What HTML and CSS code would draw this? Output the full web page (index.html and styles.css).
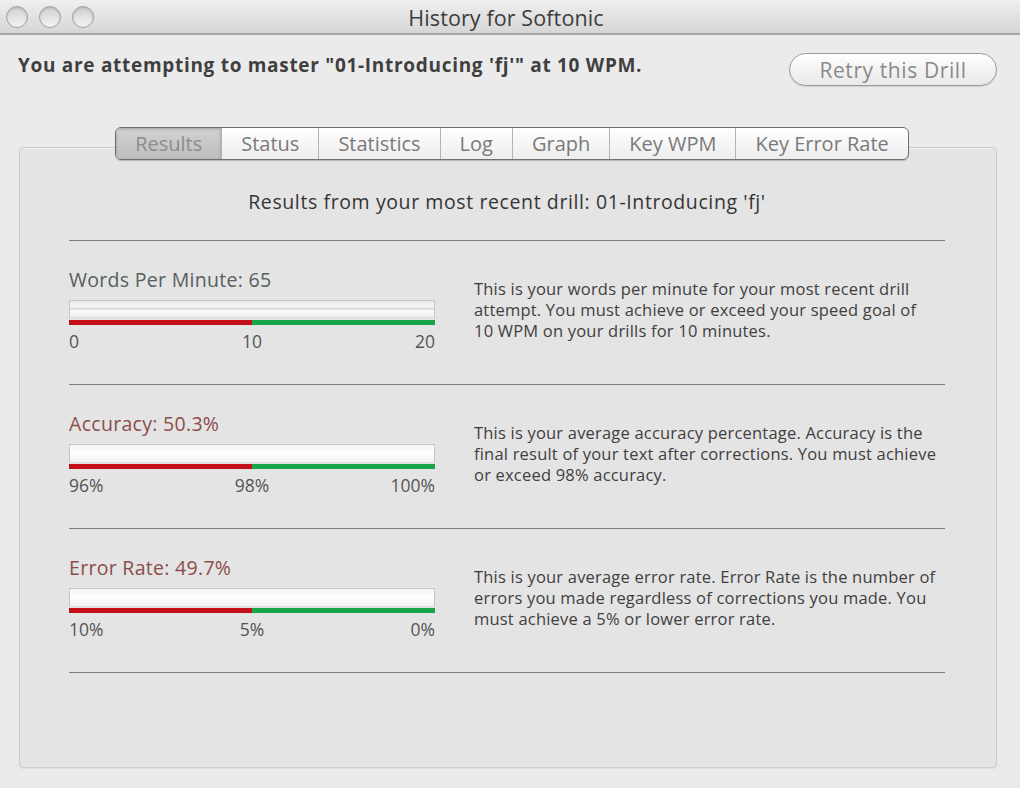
FILE: index.html
```html
<!DOCTYPE html>
<html lang="en">
<head>
    <meta charset="UTF-8">
    <title>History for Softonic</title>
    <link rel="stylesheet" href="styles.css">
</head>
<body>
    <div class="window">
        <div class="titlebar">
            <div class="lights">
                <span class="light"></span>
                <span class="light"></span>
                <span class="light"></span>
            </div>
            <div class="title">History for Softonic</div>
            <div></div>
        </div>

        <div class="content">
            <div class="top">
                <p class="headline">You are attempting to master "01-Introducing 'fj'" at 10 WPM.</p>
                <button class="retry">Retry this Drill</button>
            </div>

            <div class="tabs">
                <span class="tab selected">Results</span>
                <span class="tab">Status</span>
                <span class="tab">Statistics</span>
                <span class="tab">Log</span>
                <span class="tab">Graph</span>
                <span class="tab">Key WPM</span>
                <span class="tab">Key Error Rate</span>
            </div>

            <div class="box">
                <h2 class="heading">Results from your most recent drill: 01-Introducing 'fj'</h2>

                <div class="section">
                    <div class="gauge">
                        <div class="label green">Words Per Minute: 65</div>
                        <div class="track full"></div>
                        <div class="zones"><span class="red"></span><span class="grn"></span></div>
                        <div class="scale"><span>0</span><span>10</span><span>20</span></div>
                    </div>
                    <p class="desc">This is your words per minute for your most recent drill<br>attempt. You must achieve or exceed your speed goal of<br>10 WPM on your drills for 10 minutes.</p>
                </div>

                <div class="section">
                    <div class="gauge">
                        <div class="label bad">Accuracy: 50.3%</div>
                        <div class="track"></div>
                        <div class="zones"><span class="red"></span><span class="grn"></span></div>
                        <div class="scale"><span>96%</span><span>98%</span><span>100%</span></div>
                    </div>
                    <p class="desc">This is your average accuracy percentage. Accuracy is the<br>final result of your text after corrections. You must achieve<br>or exceed 98% accuracy.</p>
                </div>

                <div class="section">
                    <div class="gauge">
                        <div class="label bad">Error Rate: 49.7%</div>
                        <div class="track"></div>
                        <div class="zones"><span class="red"></span><span class="grn"></span></div>
                        <div class="scale"><span>10%</span><span>5%</span><span>0%</span></div>
                    </div>
                    <p class="desc">This is your average error rate. Error Rate is the number of<br>errors you made regardless of corrections you made. You<br>must achieve a 5% or lower error rate.</p>
                </div>
            </div>
        </div>
    </div>
</body>
</html>
```

FILE: styles.css
```css
body {
    margin: 0;
    padding: 0;
    font-family: "Open Sans", "DejaVu Sans", sans-serif;
    background: #ebebeb;
    color: #3a3a3a;
}
.window {
    width: 1020px;
    height: 788px;
    background: #ebebeb;
}
.titlebar {
    display: grid;
    grid-template-columns: 1fr auto 1fr;
    align-items: center;
    height: 33px;
    border-bottom: 2px solid #a4a4a4;
    background: linear-gradient(#f0f0f0, #e2e2e2 50%, #d6d6d6);
}
.lights {
    display: flex;
    gap: 11px;
    padding-left: 6px;
}
.light {
    width: 20px;
    height: 20px;
    border-radius: 50%;
    border: 1px solid #a2a2a2;
    background: linear-gradient(#cfcfcf, #e6e6e6 60%, #f3f3f3);
    box-shadow: inset 0 1px 2px rgba(0, 0, 0, 0.15);
}
.title {
    font-size: 21.5px;
    line-height: 33px;
    padding: 1px 8px 0 0;
    letter-spacing: 0.1px;
    color: #3c3c3c;
}
.content {
    padding: 0 23px 0 19px;
}
.top {
    display: flex;
    justify-content: space-between;
    align-items: flex-start;
    padding-top: 18px;
}
.headline {
    margin: 0 0 0 -1px;
    font-size: 19px;
    line-height: 24px;
    font-weight: bold;
    letter-spacing: 0.7px;
    color: #3f3f3f;
}
.retry {
    width: 208px;
    height: 33px;
    border: 1px solid #9a9a9a;
    border-radius: 17px;
    background: linear-gradient(#ffffff, #f3f3f3 50%, #e9e9e9);
    box-shadow: 0 1px 1px rgba(0, 0, 0, 0.12);
    font-family: inherit;
    font-size: 21px;
    letter-spacing: 0.6px;
    color: #8a8a8a;
    padding: 0;
}
.tabs {
    position: relative;
    z-index: 1;
    display: flex;
    width: max-content;
    margin: 41px auto 0;
    left: 4px;
    border: 1px solid #6e6e6e;
    border-radius: 6px;
    background: linear-gradient(#ffffff, #f6f6f6 50%, #ededed);
    box-shadow: 0 1px 1px rgba(0, 0, 0, 0.2);
    overflow: hidden;
}
.tab {
    padding: 0 19px;
    font-size: 20px;
    line-height: 31px;
    color: #7a7a7a;
    border-left: 1px solid #b4b4b4;
}
.tab:first-child {
    border-left: none;
}
.tab.selected {
    background: linear-gradient(#d2d2d2, #c8c8c8 50%, #bdbdbd);
    box-shadow: inset 0 1px 3px rgba(0, 0, 0, 0.25);
    color: #8c8c8c;
    border-right: 1px solid #8e8e8e;
    margin-right: -1px;
}
.box {
    margin-top: -13px;
    padding: 42px 51px 94px 49px;
    background: #e4e4e4;
    border: 1px solid #cdcdcd;
    border-radius: 4px;
    box-shadow: inset 0 1px 0 #f0f0f0, 0 1px 1px rgba(0, 0, 0, 0.06);
}
.heading {
    margin: 0 0 26px;
    text-align: center;
    font-weight: normal;
    font-size: 19.5px;
    line-height: 24px;
    letter-spacing: 0.6px;
    color: #353535;
}
.section {
    display: flex;
    gap: 39px;
    box-sizing: border-box;
    height: 144px;
    padding-top: 26px;
    border-top: 1px solid #7d7d7d;
}
.section:last-child {
    border-bottom: 1px solid #7d7d7d;
    height: 145px;
}
.gauge {
    width: 366px;
    flex: none;
}
.label {
    font-size: 19.5px;
    line-height: 26px;
    letter-spacing: 0.3px;
}
.label.green {
    color: #56605e;
}
.label.bad {
    color: #8c4d4a;
}
.track {
    margin-top: 7px;
    height: 17px;
    border: 1px solid #c6c6c6;
    border-bottom-color: #dcdcdc;
    background: linear-gradient(#f4f4f4, #ffffff 45%, #f3f3f3);
}
.track.full {
    background: linear-gradient(#e8e8e8, #f6f6f6 35%, #d6d6d6 45%, #f8f8f8 55%, #f2f2f2 85%, #e0e0e0);
}
.zones {
    display: flex;
    height: 5px;
    margin-top: 1px;
}
.zones span {
    flex: 1;
}
.zones .red {
    background: #c20f18;
}
.zones .grn {
    background: #17a447;
}
.scale {
    display: grid;
    grid-template-columns: 1fr auto 1fr;
    margin-top: 5px;
    font-size: 17.5px;
    line-height: 22px;
    color: #555;
}
.scale span:last-child {
    text-align: right;
}
.desc {
    margin: 11px 0 0;
    font-size: 16.5px;
    line-height: 21px;
    letter-spacing: 0.2px;
    color: #404040;
    white-space: nowrap;
}
```
